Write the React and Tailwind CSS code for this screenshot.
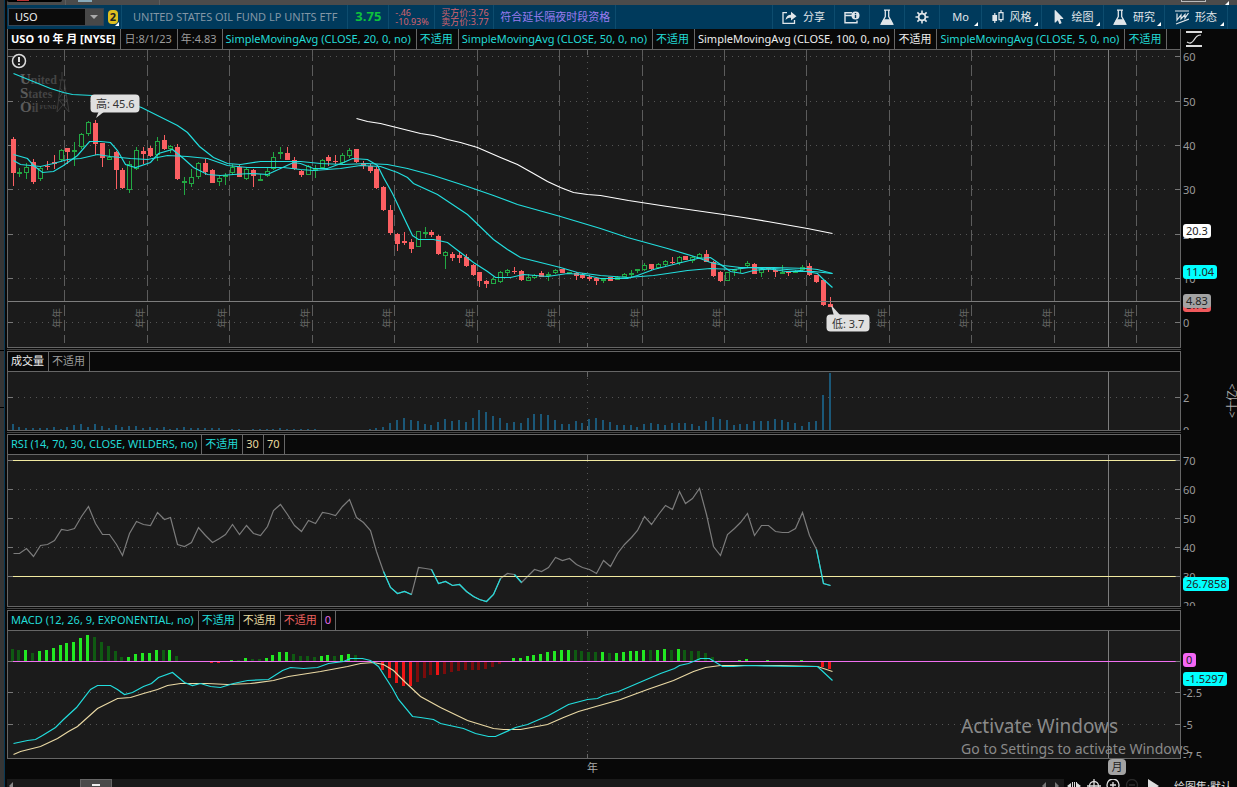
import { FaMousePointer } from 'react-icons/fa';

const X = (i) => Math.floor(5 + 6.867 * i);

// [body top, body bottom, wick top, wick bottom, up]
const candles = [
  [89, 123, 87, 136, 0], [122, 123, 118, 127, 1], [117, 123, 113, 129, 1], [112, 132, 109, 134, 0], [118, 129, 116, 131, 1],
  [116, 117, 111, 120, 0], [112, 114, 105, 119, 0], [100, 110, 99, 112, 1], [98, 102, 98, 114, 0], [100, 102, 92, 116, 1],
  [84, 97, 83, 99, 1], [72, 84, 71, 86, 1], [73, 94, 70, 105, 0], [93, 108, 93, 117, 0], [107, 110, 99, 110, 1],
  [102, 120, 101, 139, 0], [120, 138, 118, 139, 0], [114, 140, 111, 143, 1], [100, 119, 97, 120, 1], [101, 104, 97, 114, 0],
  [98, 106, 96, 107, 0], [91, 105, 87, 111, 1], [90, 99, 85, 100, 0], [96, 99, 95, 103, 1], [97, 129, 94, 130, 0],
  [131, 132, 127, 145, 1], [127, 134, 119, 137, 1], [113, 127, 112, 129, 1], [113, 122, 109, 125, 0], [120, 133, 119, 133, 0],
  [128, 132, 126, 136, 1], [125, 126, 123, 135, 1], [117, 123, 114, 125, 1], [117, 127, 115, 127, 0], [119, 129, 117, 130, 1],
  [120, 126, 119, 137, 0], [129, 130, 124, 131, 1], [121, 126, 117, 127, 1], [107, 119, 102, 120, 1], [102, 103, 97, 109, 1],
  [103, 110, 97, 110, 0], [110, 119, 107, 120, 0], [121, 125, 120, 127, 0], [116, 125, 115, 125, 1], [119, 120, 115, 128, 1],
  [110, 118, 109, 119, 1], [107, 111, 105, 116, 0], [111, 112, 105, 114, 0], [105, 113, 103, 114, 1], [100, 106, 98, 108, 1],
  [99, 112, 99, 113, 0], [113, 116, 111, 119, 0], [116, 121, 114, 123, 0], [119, 138, 117, 139, 0], [137, 160, 136, 161, 0],
  [160, 183, 155, 185, 0], [184, 194, 183, 201, 0], [191, 193, 182, 195, 0], [192, 199, 189, 203, 0], [181, 197, 181, 197, 1],
  [182, 183, 177, 188, 1], [182, 185, 180, 187, 0], [186, 204, 185, 205, 0], [202, 206, 201, 219, 1], [204, 208, 202, 211, 0],
  [205, 208, 201, 213, 0], [207, 216, 204, 217, 0], [215, 225, 214, 226, 0], [222, 231, 222, 237, 0], [231, 234, 230, 238, 0],
  [229, 234, 227, 234, 1], [222, 232, 221, 233, 1], [220, 223, 219, 226, 1], [221, 222, 217, 224, 0], [221, 230, 220, 231, 0],
  [227, 231, 224, 231, 1], [225, 228, 224, 229, 1], [223, 227, 221, 227, 0], [224, 226, 222, 231, 1], [220, 223, 219, 224, 1],
  [219, 223, 219, 223, 0], [222, 223, 222, 223, 1], [223, 226, 222, 230, 0], [225, 228, 223, 229, 0], [227, 229, 225, 231, 0],
  [228, 231, 227, 235, 0], [229, 231, 229, 233, 1], [227, 231, 227, 231, 0], [227, 230, 226, 230, 1], [224, 227, 223, 227, 1],
  [223, 225, 220, 227, 1], [219, 221, 219, 223, 1], [215, 220, 213, 221, 1], [214, 219, 214, 220, 0], [214, 218, 213, 219, 1],
  [211, 215, 210, 216, 1], [212, 213, 207, 214, 0], [207, 213, 206, 215, 1], [206, 210, 206, 210, 0], [207, 211, 206, 213, 1],
  [204, 208, 203, 209, 1], [204, 212, 200, 212, 0], [212, 226, 211, 227, 0], [222, 231, 221, 232, 0], [222, 231, 222, 231, 1],
  [219, 221, 219, 226, 1], [217, 219, 217, 223, 1], [213, 216, 211, 217, 1], [214, 224, 213, 224, 0], [219, 223, 218, 227, 1],
  [218, 219, 217, 222, 0], [220, 222, 219, 227, 0], [222, 223, 215, 224, 1], [222, 223, 221, 226, 0], [221, 222, 220, 222, 1],
  [217, 220, 215, 221, 1], [216, 225, 213, 226, 0], [225, 232, 225, 233, 0], [230, 255, 230, 256, 0], [254, 257, 247, 257, 0],
];

const sma5 = '5,104 19,108 25,115 34,122 45,121 55,115 69,105 81,91 92,91 102,92 109,100 117,114 127,117 142,112 150,103 164,99 175,108 185,117 199,124 212,125 225,124 242,123 259,124 272,118 285,112 292,113 305,118 319,118 335,112 344,108 359,109 369,115 375,127 384,143 392,160 404,185 410,189 425,189 439,192 452,202 465,212 479,221 487,227 502,227 515,224 539,226 559,223 575,224 592,228 619,228 629,225 645,219 665,214 689,208 702,207 712,214 722,221 734,223 745,220 765,218 792,220 809,223 815,229 824,237';
const sma20 = '5,110 12,114 32,116 45,113 59,109 72,108 89,104 102,106 122,108 139,109 159,105 179,106 199,108 219,115 239,117 275,117 292,119 305,120 332,118 352,115 372,116 389,122 399,127 405,133 429,144 459,164 485,189 499,199 512,207 532,212 552,217 569,222 592,225 619,227 645,225 659,223 679,220 702,218 725,219 742,217 765,219 778,221 805,221 824,223';
const sma50 = '5,23 42,38 55,42 64,44 84,45 105,48 133,57 155,68 169,75 179,82 191,96 205,107 219,113 232,114 252,111 292,111 312,113 335,114 359,113 379,114 399,118 425,125 459,136 485,145 509,154 552,166 592,178 619,187 659,198 689,207 702,212 715,215 732,217 765,217 799,218 809,219 824,223';
const sma100 = '348,68 359,71 372,73 392,78 412,83 425,85 439,89 452,92 469,97 492,107 509,114 525,123 539,131 552,137 565,142 579,144 592,145 620,150 659,156 715,164 735,167 759,171 799,178 824,183';

const volume = [
  6, 3, 2, 2, 2, 2, 3, 1, 3, 5, 6, 3, 6, 4, 2, 5, 3, 4, 4, 2, 3, 2, 3, 1, 2, 3, 2, 2, 2, 2,
  2, 0, 1, 1, 0, 1, 1, 1, 1, 2, 1, 1, 1, 1, 1, 0, 0, 0, 0, 0, 0, 0, 1, 2, 3, 7, 10, 12, 10, 9,
  6, 5, 8, 11, 9, 10, 8, 12, 20, 18, 14, 12, 7, 8, 7, 12, 16, 16, 15, 10, 6, 6, 9, 7, 11, 12, 10, 8, 5, 5,
  5, 3, 6, 7, 6, 5, 7, 7, 7, 6, 4, 9, 13, 11, 10, 5, 6, 6, 9, 9, 9, 11, 10, 8, 7, 4, 8, 9, 35, 57,
];

const rsi = [
  98, 98, 93, 101, 90, 89, 85, 74, 75, 73, 61, 51, 68, 79, 79, 89, 100, 78, 66, 69, 70, 57, 64, 62, 89, 91, 87, 72, 80, 87,
  83, 79, 69, 79, 70, 78, 80, 71, 55, 49, 59, 70, 76, 65, 68, 57, 58, 60, 51, 44, 62, 67, 75, 96, 116, 132, 138, 136, 139, 112,
  113, 114, 128, 126, 130, 129, 136, 141, 144, 146, 139, 123, 118, 119, 127, 120, 114, 116, 112, 102, 105, 103, 109, 112, 114, 118, 105, 111, 98, 89,
  82, 75, 61, 69, 59, 50, 54, 36, 48, 43, 33, 59, 91, 100, 79, 73, 67, 58, 80, 70, 70, 76, 77, 77, 73, 57, 80, 94, 128, 130,
];
const oversold = [[54, 58], [61, 71], [73, 74], [117, 119]];

const hist = [
  12, 11, 11, 8, 10, 11, 13, 16, 18, 19, 23, 26, 24, 19, 15, 10, 4, 4, 7, 8, 8, 11, 11, 11, 5, 0, -1, 0, 0, -2,
  -2, -1, 1, 1, 3, 2, 2, 3, 6, 9, 9, 7, 5, 5, 4, 5, 6, 5, 6, 7, 6, 0, 0, -1, -9, -17, -22, -25, -25, -21,
  -17, -14, -14, -13, -11, -10, -9, -9, -9, -8, -6, -3, 0, 3, 3, 5, 6, 7, 9, 10, 11, 11, 11, 10, 9, 9, 9, 8, 8, 9,
  10, 10, 11, 11, 11, 12, 11, 12, 11, 10, 10, 8, 4, 1, 0, 0, 1, 2, 0, 0, 1, 0, 0, 0, 0, 1, 0, -1, -6, -8,
];
const dim = new Set([
  0, 1, 3, 12, 13, 14, 15, 16, 22, 24, 31, 33, 35, 36, 41, 42, 43, 44, 47, 50, 59, 60, 61, 63, 64, 65, 66, 67, 68, 69, 70, 71,
  82, 83, 84, 85, 87, 93, 96, 98, 99, 100, 101, 102, 103,
]);

const macdLine = '5,112 19,109 27,108 34,104 47,96 55,88 68,76 82,58 89,54 102,54 109,58 116,63 124,61 135,55 143,52 150,46 164,41 176,51 184,54 192,52 202,55 212,56 225,52 239,49 260,48 274,39 282,36 295,37 309,36 320,32 335,30 342,27 354,27 362,29 370,35 377,46 384,57 390,68 404,85 412,86 425,88 432,92 455,97 467,102 480,105 487,105 507,96 519,93 540,84 560,73 579,68 589,67 595,64 610,60 652,42 666,37 671,34 680,32 692,27 701,27 714,35 725,35 739,34 789,35 809,35 824,49';
const signalLine = '5,123 12,120 32,115 49,107 60,100 69,95 89,77 109,67 122,66 135,62 149,58 159,54 172,52 199,52 219,53 242,52 265,49 280,45 312,40 339,35 352,32 365,31 375,33 385,39 397,51 412,65 432,76 459,89 485,97 495,98 512,98 539,93 555,86 570,80 612,68 639,58 665,49 685,40 697,36 712,34 772,34 809,35 824,40';

const years = [56, 139, 221, 304, 386, 469, 551, 634, 716, 798, 881, 963, 1046, 1128];

const cyan = '#22dede';

function HGrid({ ys }) {
  return ys.map((y) => (
    <g key={y}>
      <line x1="0" x2="5" y1={y + 0.5} y2={y + 0.5} stroke="#777" />
      <line x1="10" x2="98.8%" y1={y + 0.5} y2={y + 0.5} stroke="#555" strokeDasharray="1 5" />
      <svg x="100%" overflow="visible">
        <line x1="-5" x2="0" y1={y + 0.5} y2={y + 0.5} stroke="#777" />
      </svg>
    </g>
  ));
}

function MidLine({ h }) {
  return (
    <g stroke="#666">
      <line x1="579.5" x2="579.5" y1="0" y2={h} stroke="#555" strokeDasharray="1 5" />
      <line x1="579.5" x2="579.5" y1="0" y2="5" />
      <line x1="579.5" x2="579.5" y1={h - 4} y2={h} />
    </g>
  );
}

function Cursor() {
  return <line x1="1100.5" x2="1100.5" y1="0" y2="100%" stroke="#7d7d7d" />;
}

function Curve({ points, color }) {
  return <polyline points={points} fill="none" stroke={color} strokeWidth="1.2" transform="translate(0.5 0.5)" />;
}

function Tick({ y, children }) {
  return <text x="2" y={y + 4} fontSize="11" fill="#9a9a9a">{children}</text>;
}

function Tag({ y, w, bg, color = '#222', children }) {
  return (
    <g>
      <rect x="2" y={y - 7} width={w} height="14" rx="3" fill={bg} />
      <text x="5" y={y + 4} fontSize="11" fill={color}>{children}</text>
    </g>
  );
}

function Panel({ cells, height, axis, corner, first, children }) {
  return (
    <section className="flex">
      <div className={`min-w-0 flex-1 border-x border-b border-[#666] ${first ? '' : 'border-t'}`}>
        <div className={`flex overflow-hidden border-b border-[#666] bg-[#090909] text-[11px] whitespace-nowrap ${first ? 'h-[21px] leading-[20px]' : 'h-[20px] leading-[18px]'}`}>
          {cells.map(([text, cls], i) => (
            <span key={i} className={`shrink-0 border-r border-[#666] pl-[3px] ${first ? 'pr-[5px]' : 'pr-[4px]'} ${cls}`}>{text}</span>
          ))}
        </div>
        <svg className={`block w-full bg-[#1b1b1b] ${height}`}>{children}</svg>
      </div>
      <div className="flex w-[56px] shrink-0 flex-col justify-end">
        {corner}
        <svg className={`mb-px block w-full ${height}`}>{axis}</svg>
      </div>
    </section>
  );
}

function Gap() {
  return (
    <div className="mr-[56px] h-[3px] py-px">
      <div className="h-px bg-[#444]" />
    </div>
  );
}

function ToolButton({ className, label, arrow, children }) {
  return (
    <button type="button" aria-label={label} className={`relative flex h-full shrink-0 items-center justify-center gap-[6px] border-l border-[#0d4c6e] text-[11px] text-[#e0e6ea] ${className}`}>
      {children}
      {arrow && <span className="absolute right-[3px] bottom-[3px] border-b-4 border-l-4 border-b-white border-l-transparent" />}
    </button>
  );
}

function FlaskIcon() {
  return (
    <svg width="14" height="17" viewBox="0 0 14 17" fill="none" stroke="#e0e6ea" strokeWidth="1.3">
      <path d="M4 1.2h6M5.3 1.5v6L1.2 15.2h11.6L8.7 7.5v-6" />
      <path d="M3.8 11h6.4l2 4.2H1.6z" fill="#e0e6ea" />
    </svg>
  );
}

function TopBar() {
  return (
    <header className="flex h-[24px] items-center overflow-hidden bg-[#003a5c]">
      <div className="ml-[1px] flex h-[18px] w-[96px] shrink-0 border border-[#345] bg-[#0b0b0b]">
        <input aria-label="Symbol" defaultValue="USO" className="w-[76px] bg-transparent pl-[6px] text-[11px] text-[#eee] outline-none" />
        <button type="button" aria-label="Symbol list" className="flex flex-1 items-center justify-center bg-[#484848]">
          <span className="border-x-4 border-t-4 border-x-transparent border-t-[#aaa]" />
        </button>
      </div>
      <button type="button" className="relative ml-[4px] flex h-full w-[13px] shrink-0 items-center">
        <span className="h-[14px] w-[10px] rounded-sm bg-[#dfc020] text-center text-[11px] leading-[14px] font-bold text-[#222]">2</span>
        <span className="absolute right-[2px] bottom-[3px] border-b-4 border-l-4 border-b-white border-l-transparent" />
      </button>
      <div className="flex h-full shrink-0 items-center border-l border-[#0d4c6e] pr-[10px] pl-[11px] text-[11px] text-[#8296a5]">UNITED STATES OIL FUND LP UNITS ETF</div>
      <div className="flex h-full w-[41px] shrink-0 items-center justify-center border-l border-[#0d4c6e] text-[13px] font-bold text-[#0fc03c]">3.75</div>
      <div className="flex h-full w-[46px] shrink-0 flex-col justify-center border-l border-[#0d4c6e] pl-[6px] text-[9px] leading-[9px] text-[#d4636f]">
        <span>-.46</span>
        <span>-10.93%</span>
      </div>
      <div className="flex h-full w-[59px] shrink-0 flex-col justify-center border-l border-[#0d4c6e] pl-[6px] text-[9px] leading-[9px] whitespace-nowrap text-[#d4636f]">
        <span>买方价:3.76</span>
        <span>卖方价:3.77</span>
      </div>
      <div className="flex h-full w-[123px] shrink-0 items-center border-x border-[#0d4c6e] pl-[6px] text-[11px] text-[#9a7cf0]">符合延长隔夜时段资格</div>
      <nav className="ml-auto flex h-full shrink-0 pr-[9px]">
        <ToolButton className="w-[62px]">
          <svg width="15" height="13" viewBox="0 0 15 13" fill="none" stroke="#e0e6ea" strokeWidth="1.3">
            <path d="M5 1.7H1v10.6h11.5V9" />
            <path d="M3.5 9C4 5.5 6 3.7 9 3.7V.8l5.5 4.5L9 9.600V6.700C6.500 6.700 5 7.300 3.500 9z" fill="#e0e6ea" stroke="none" />
          </svg>
          分享
        </ToolButton>
        <ToolButton className="w-[35px]" label="Info">
          <svg width="16" height="13" viewBox="0 0 16 13" fill="none" stroke="#e0e6ea" strokeWidth="1.4">
            <path d="M8 1.700H1v10h12V9.500M1 4.500h7" />
            <circle cx="11.500" cy="4.500" r="4" fill="#e0e6ea" stroke="none" />
            <path d="M11.500 2v1.200M11.500 4v3" stroke="#003a5c" />
          </svg>
        </ToolButton>
        <ToolButton className="w-[35px]" label="Studies"><FlaskIcon /></ToolButton>
        <ToolButton className="w-[35px]" label="Settings">
          <svg width="14" height="14" viewBox="0 0 14 14" fill="none" stroke="#e0e6ea">
            <circle cx="7" cy="7" r="3.400" strokeWidth="1.800" />
            <path d="M7 .5v3M7 10.500v3M.5 7h3M10.500 7h3M2.400 2.400l2 2M9.600 9.600l2 2M11.600 2.400l-2 2M4.400 9.600l-2 2" strokeWidth="1.600" />
          </svg>
        </ToolButton>
        <ToolButton className="w-[42px]" arrow>Mo</ToolButton>
        <ToolButton className="w-[60px]" arrow>
          <svg width="12" height="14" viewBox="0 0 12 14" fill="none" stroke="#e0e6ea" strokeWidth="1.2">
            <path d="M1 5.500h3.500v5H1z" fill="#e0e6ea" />
            <path d="M2.800 3v10M9 0v2.500M9 9.500V12M7 2.600h4v7H7z" />
          </svg>
          风格
        </ToolButton>
        <ToolButton className="w-[62px]" arrow>
          <FaMousePointer size={14} />
          绘图
        </ToolButton>
        <ToolButton className="w-[61px]" arrow>
          <FlaskIcon />
          研究
        </ToolButton>
        <ToolButton className="w-[64px] border-r" arrow>
          <svg width="14" height="15" viewBox="0 0 14 15" fill="none" stroke="#e0e6ea" strokeWidth="1.2">
            <path d="M0 1h14M1 14l13-5" />
            <path d="M2 3.500v6.500l4-5v4l4-4.500v3.500l3.500-5" />
          </svg>
          形态
        </ToolButton>
      </nav>
    </header>
  );
}

function PriceChart() {
  return (
    <>
      {years.map((x) => (
        <g key={x}>
          <line x1={x + 0.5} x2={x + 0.5} y1="0" y2="293" stroke="#5c5c5c" strokeDasharray="11 4" />
          <text transform={`translate(${x - 3} 278) rotate(-90)`} fontSize="10" fill="#666">年年</text>
        </g>
      ))}
      <MidLine h={297} />
      <HGrid ys={[6, 51, 95, 139, 184, 228, 272]} />
      <g fontFamily="Liberation Serif" fontWeight="bold" fill="#444">
        <text x="12" y="34" fontSize="12"><tspan fontSize="15" fill="#5a5a5a">U</tspan>nited</text>
        <text x="12" y="48" fontSize="12"><tspan fontSize="15" fill="#5a5a5a">S</tspan>tates</text>
        <text x="12" y="62" fontSize="12"><tspan fontSize="15" fill="#5a5a5a">O</tspan>il<tspan fontSize="6" dy="-3"> FUND</tspan></text>
        <path d="M54 22v8M51 30h7M53 30l-4 32M56 30l5 32M52 38l6 8M58 38l-7 10M50 50h10M49 62l10-12M61 62L51 50" stroke="#3c3c3c" fill="none" />
      </g>
      <circle cx="11" cy="11" r="6.500" fill="#1b1b1b" stroke="#ddd" strokeWidth="1.500" />
      <path d="M11 7v5M11 13.500v1.500" stroke="#ddd" strokeWidth="2" />
      {candles.map(([t, b, hi, lo, up], i) => {
        const x = X(i);
        const h = Math.max(b - t, 1);
        return up ? (
          <g key={i} stroke="#22a843" fill="none">
            <line x1={x + 0.5} x2={x + 0.5} y1={hi} y2={t} />
            <line x1={x + 0.5} x2={x + 0.5} y1={b} y2={lo} />
            <rect x={x - 1.5} y={t + 0.5} width="4" height={Math.max(h - 1, 1)} />
          </g>
        ) : (
          <g key={i} fill="#fb5f62">
            <rect x={x} y={hi} width="1" height={lo - hi} />
            <rect x={x - 2} y={t} width="5" height={h} />
          </g>
        );
      })}
      <Curve points={sma50} color={cyan} />
      <Curve points={sma20} color={cyan} />
      <Curve points={sma5} color={cyan} />
      <Curve points={sma100} color="#fff" />
      <line x1="0" x2="100%" y1="251.5" y2="251.5" stroke="#7d7d7d" />
      <Cursor />
      <path d="M88 68l3-7h6z" fill="#ddd" />
      <rect x="82.5" y="44.5" width="49" height="18" rx="4" fill="#e0e0e0" />
      <text x="88" y="58" fontSize="11" fill="#333">高: 45.6</text>
      <path d="M823 255l3 11h7z" fill="#ddd" />
      <rect x="818.5" y="264.5" width="43" height="17" rx="4" fill="#e0e0e0" />
      <text x="824" y="278" fontSize="11" fill="#333">低: 3.7</text>
    </>
  );
}

function VolumeChart() {
  return (
    <>
      <MidLine h={58} />
      <HGrid ys={[25]} />
      {volume.map((v, i) => <rect key={i} x={X(i) - 1} y={58 - v} width="2" height={v} fill="#1b5878" />)}
      <Cursor />
    </>
  );
}

function RsiChart() {
  const line = (a, b) => rsi.slice(a, b + 1).map((y, k) => `${X(a + k)},${y}`).join(' ');
  return (
    <>
      <MidLine h={151} />
      <HGrid ys={[5, 34, 63, 92, 121]} />
      <Curve points={line(0, 119)} color="#7c7c7c" />
      <Cursor />
      <g fill="#f2eaa0">
        <rect x="5" y="5" width="99.2%" height="1" />
        <rect x="5" y="121" width="99.2%" height="1" />
      </g>
      {oversold.map(([a, b]) => <Curve key={a} points={line(a, b)} color={cyan} />)}
    </>
  );
}

function MacdChart() {
  const fill = (v, i) => {
    if (v > 0) return dim.has(i) ? '#0f5a12' : '#22e822';
    return dim.has(i) ? '#7a0c0c' : '#ec1515';
  };
  return (
    <>
      <MidLine h={127} />
      <HGrid ys={[30, 61, 93]} />
      {hist.map((v, i) => <rect key={i} x={X(i) - 2} y={v > 0 ? 30 - v : 30} width="3" height={Math.abs(v)} fill={fill(v, i)} />)}
      <Cursor />
      <rect x="5" y="30" width="99.2%" height="1" fill="#f070f0" />
      <Curve points={signalLine} color="#ead9a4" />
      <Curve points={macdLine} color={cyan} />
    </>
  );
}

function BottomBar() {
  return (
    <footer className="flex h-[16px] shrink-0 overflow-hidden text-[#ddd]">
      <div className="flex min-w-0 flex-1 items-start bg-[#1a1a1a]">
        <span className="mt-[3px] ml-[2px] border-y-4 border-r-4 border-y-transparent border-r-[#888]" />
        <span className="ml-[67px] flex h-full w-[32px] justify-center border border-[#666] bg-[#4a4a4a] pt-[4px]">
          <span className="h-[2px] w-[8px] bg-[#eee]" />
        </span>
        <span className="mt-[3px] ml-auto border-y-4 border-r-4 border-y-transparent border-r-[#777]" />
        <span className="mt-[3px] mr-[5px] ml-[9px] border-y-4 border-l-4 border-y-transparent border-l-[#777]" />
      </div>
      <svg width="110" height="16" fill="none" stroke="#ddd" strokeWidth="1.3">
        <path d="M3 7l4-3v6zM17 7l-4-3v6z" fill="#ddd" stroke="none" />
        <path d="M8.500 3v8M10.500 3v8M12.500 3v8" strokeWidth="1" />
        <circle cx="30" cy="7" r="4.500" />
        <path d="M30 0v14M23 7h14" />
        <circle cx="49" cy="6" r="6" />
        <path d="M46 6h6M49 3v6" />
        <circle cx="68" cy="6" r="5.500" stroke="#2a2a2a" />
        <path d="M65 6h6" stroke="#333" />
        <path d="M84 0l11 7-11 7z" fill="#ddd" stroke="none" />
      </svg>
      <button type="button" className="w-[63px] text-left text-[11px] leading-[14px] whitespace-nowrap">绘图集:默认</button>
    </footer>
  );
}

const teal = 'text-[#22dad6]';

export default function App() {
  return (
    <div className="relative flex h-screen overflow-hidden bg-[#080808] font-['Noto_Sans','Noto_Sans_CJK_SC',sans-serif]">
      <aside className="flex w-[7px] shrink-0">
        <div className="flex w-[4px] flex-col bg-[#363636]">
          <span className="mt-[350px] h-px bg-black" />
          <span className="mt-[56px] h-px bg-black" />
        </div>
        <div className="w-px bg-[#0b3a55]" />
      </aside>
      <main className="min-w-0 flex-1">
        <div className="flex h-[5px] bg-[#4b4b4b]">
          <div className="h-[2px] w-[55px] rounded-b-sm bg-black px-[10px]"><div className="h-px w-[12px] bg-[#b33]" /></div>
          <div className="ml-[3px] h-full w-px bg-[#5e5e5e]" />
          <div className="ml-[12px] h-[2px] w-[14px] bg-[#8ab]" />
          <div className="ml-[67px] h-full w-px bg-[#5e5e5e]" />
          <div className="ml-auto h-[2px] w-[25px] border-x border-b border-[#bbb]" />
          <div className="mr-[8px] ml-[19px] self-end border-b-4 border-l-4 border-b-white border-l-transparent" />
        </div>
        <TopBar />
        <Panel
          first
          height="h-[297px]"
          corner={
            <svg width="56" height="21" fill="none" stroke="#ddd">
              <path d="M5 3h16M5 17h16" strokeWidth="2" />
              <path d="M6 13c3 2 5 1 7-2s3-5 7-5" strokeWidth="1.200" />
            </svg>
          }
          cells={[
            ['USO 10 年 月 [NYSE]', 'text-white font-bold'],
            ['日:8/1/23', 'text-[#9c9c9c]'],
            ['年:4.83', 'text-[#9c9c9c]'],
            ['SimpleMovingAvg (CLOSE, 20, 0, no)', teal],
            ['不适用', teal],
            ['SimpleMovingAvg (CLOSE, 50, 0, no)', teal],
            ['不适用', teal],
            ['SimpleMovingAvg (CLOSE, 100, 0, no)', 'text-[#eee]'],
            ['不适用', 'text-[#eee]'],
            ['SimpleMovingAvg (CLOSE, 5, 0, no)', teal],
            ['不适用', teal],
          ]}
          axis={
            <>
              <Tick y={7}>60</Tick>
              <Tick y={52}>50</Tick>
              <Tick y={96}>40</Tick>
              <Tick y={140}>30</Tick>
              <Tick y={185}>20</Tick>
              <Tick y={229}>10</Tick>
              <Tick y={273}>0</Tick>
              <Tag y={181} w={28} bg="#fff">20.3</Tag>
              <Tag y={222} w={34} bg="#0ff">11.04</Tag>
              <Tag y={255} w={28} bg="#f0595c">3.75</Tag>
              <Tag y={251} w={28} bg="#a3a3a3">4.83</Tag>
            </>
          }
        >
          <PriceChart />
        </Panel>
        <Gap />
        <Panel
          height="h-[58px]"
          cells={[['成交量', 'text-[#eee]'], ['不适用', 'text-[#9c9c9c]']]}
          axis={
            <>
              <Tick y={26}>2</Tick>
              <Tick y={59}>0</Tick>
              <text transform="translate(55 46) rotate(-90)" fontSize="11" fill="#aaa">&lt;十亿&gt;</text>
            </>
          }
        >
          <VolumeChart />
        </Panel>
        <Gap />
        <Panel
          height="h-[151px]"
          cells={[
            ['RSI (14, 70, 30, CLOSE, WILDERS, no)', teal],
            ['不适用', teal],
            ['30', 'text-[#e6d9a0]'],
            ['70', 'text-[#e6d9a0]'],
          ]}
          axis={
            <>
              <Tick y={6}>70</Tick>
              <Tick y={35}>60</Tick>
              <Tick y={64}>50</Tick>
              <Tick y={93}>40</Tick>
              <Tick y={122}>30</Tick>
              <Tick y={151}>20</Tick>
              <Tag y={129} w={46} bg="#0ff">26.7858</Tag>
            </>
          }
        >
          <RsiChart />
        </Panel>
        <Gap />
        <Panel
          height="h-[127px]"
          cells={[
            ['MACD (12, 26, 9, EXPONENTIAL, no)', teal],
            ['不适用', teal],
            ['不适用', 'text-[#e6d9a0]'],
            ['不适用', 'text-[#e8605f]'],
            ['0', 'text-[#e66be6]'],
          ]}
          axis={
            <>
              <Tick y={62}>-2.5</Tick>
              <Tick y={94}>-5</Tick>
              <Tick y={125}>-7.5</Tick>
              <Tag y={29} w={13} bg="#f566f5">0</Tag>
              <Tag y={48} w={44} bg="#0ff">-1.5297</Tag>
            </>
          }
        >
          <MacdChart />
        </Panel>
        <div className="flex h-[20px] text-[11px] leading-[18px] text-[#aaa]">
          <span className="ml-[580px]">年</span>
          <span className="ml-[510px] h-[16px] w-[18px] rounded bg-[#a3a3a3] text-center leading-[16px] text-[#222]">月</span>
        </div>
        <BottomBar />
      </main>
      <div className="pointer-events-none absolute right-[44px] bottom-[28px] whitespace-nowrap text-[#8a8a8a]">
        <div className="text-[19px] leading-[26px]">Activate Windows</div>
        <div className="text-[14px] leading-[20px]">Go to Settings to activate Windows.</div>
      </div>
    </div>
  );
}
